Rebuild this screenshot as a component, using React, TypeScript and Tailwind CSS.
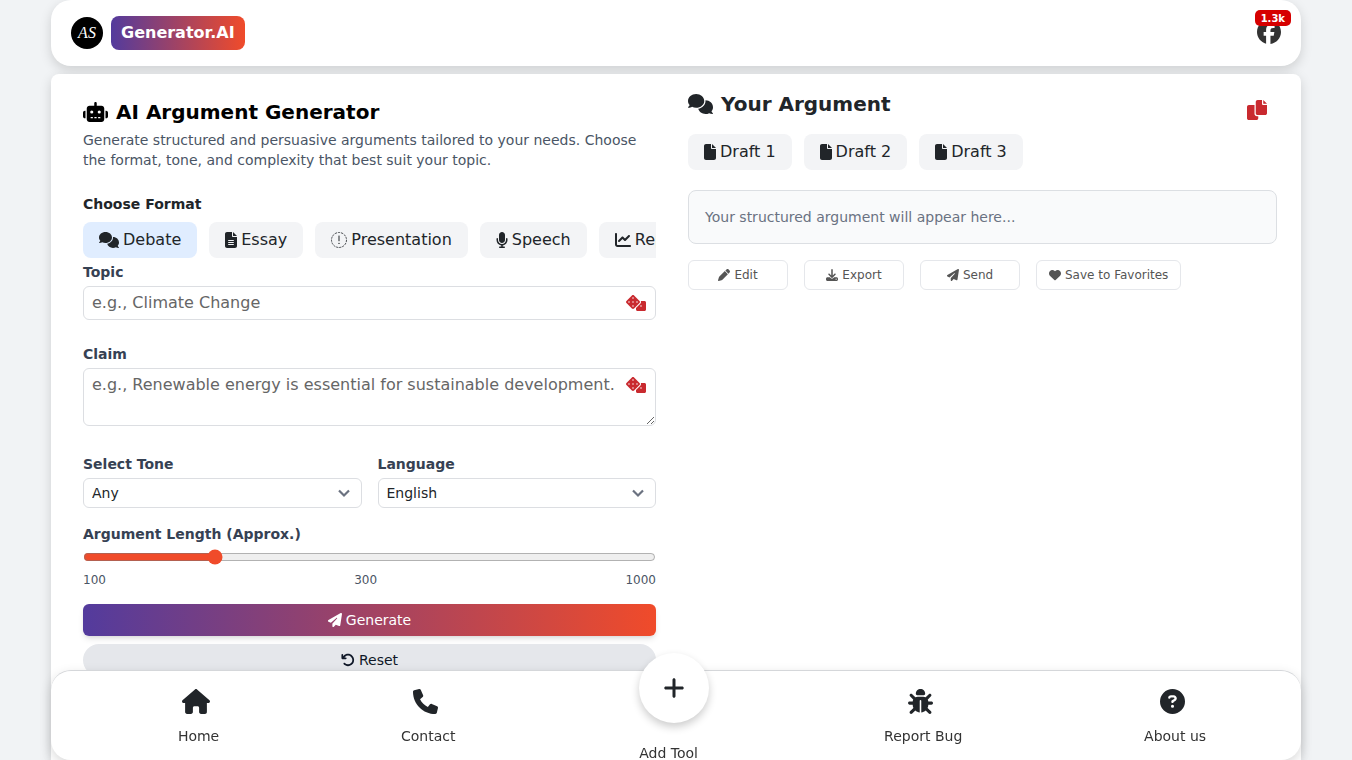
import React, { useState } from 'react';
import type { IconType } from 'react-icons';
import {
  FaBug,
  FaChartLine,
  FaCircleQuestion,
  FaDownload,
  FaFacebook,
  FaFile,
  FaFileLines,
  FaHeart,
  FaHouse,
  FaMicrophone,
  FaPaperPlane,
  FaPen,
  FaPlus,
  FaRobot,
  FaArrowRotateLeft,
} from 'react-icons/fa6';

type Icon = IconType | ((props: { className?: string }) => React.ReactElement);

const CopyIcon = ({ className }: { className?: string }) => (
  <svg viewBox="0 0 512 512" fill="currentColor" className={className} aria-hidden="true">
    <path d="M384 96V0H272c-26.5 0-48 21.500-48 48v288c0 26.500 21.500 48 48 48h192c26.500 0 48-21.500 48-48V128h-96c-17.600 0-32-14.400-32-32zM416 0v96h96L416 0zM192 352V128H48c-26.500 0-48 21.500-48 48v288c0 26.500 21.500 48 48 48h192c26.500 0 48-21.500 48-48v-48h-32c-35.300 0-64-28.700-64-64z" />
  </svg>
);

const CommentsIcon = ({ className }: { className?: string }) => (
  <svg viewBox="0 0 640 512" fill="currentColor" className={className} aria-hidden="true">
    <path d="M416 176C416 78.8 322.9 0 208 0S0 78.8 0 176c0 39.600 15.600 76 41.700 105.400-16.400 32.800-39.200 57.300-39.600 57.700-2.100 2.200-2.700 5.500-1.400 8.300C1.900 350.300 4.600 352 7.700 352c38.300 0 70.400-12.100 95.900-25.900C134.700 342.500 170.200 352 208 352c114.900 0 208-78.800 208-176zM599.600 443.700C624.800 413.900 640 376.600 640 336c0-97.200-86-176-192-176h-.9c.4 5.300.9 10.600.9 16 0 98.600-79.700 181.200-186.100 202.500C282.700 455.100 357.100 512 448 512c33.700 0 65.300-8 92.900-22C565.200 502 596.100 512 632.300 512c3.100 0 5.800-1.700 7-4.600 1.200-2.900.7-6.100-1.400-8.400-.3-.3-22-23.700-38.300-55.300z" />
  </svg>
);

const PhoneIcon = ({ className }: { className?: string }) => (
  <svg viewBox="0 0 512 512" fill="currentColor" className={className} aria-hidden="true">
    <path d="M511.200 387l-23.300 100.800c-3.300 14.200-15.800 24.200-30.500 24.200C205.200 512 0 306.800 0 54.500c0-14.700 10-27.200 24.200-30.400L125 .8c14.700-3.400 29.700 4.200 35.800 18.100l46.500 108.500c5.400 12.800 1.800 27.700-9 36.500L144.500 208c34 69.200 90.300 125.500 159.500 159.500l44.100-53.800c8.700-10.800 23.700-14.500 36.500-9l108.500 46.500c13 6 21.500 21.200 18.100 35.800z" />
  </svg>
);

const DiceIcon = ({ className }: { className?: string }) => (
  <svg viewBox="0 0 640 512" fill="currentColor" fillRule="evenodd" className={className} aria-hidden="true">
    <path d="M448 224c0-12.600-4.800-25.100-14.400-34.800L258.800 14.400C249.100 4.800 236.500 0 224 0s-25.100 4.800-34.800 14.400L14.400 189.200C4.800 198.900 0 211.400 0 224s4.800 25.200 14.400 34.800l174.800 174.900c9.700 9.500 22.300 14.300 34.800 14.300s25.100-4.800 34.800-14.300l174.800-174.900c9.600-9.700 14.400-22.200 14.400-34.800zM96 248a24 24 0 1 1 0-48 24 24 0 0 1 0 48zm128 128a24 24 0 1 1 0-48 24 24 0 0 1 0 48zm0-128a24 24 0 1 1 0-48 24 24 0 0 1 0 48zm0-128a24 24 0 1 1 0-48 24 24 0 0 1 0 48zm128 128a24 24 0 1 1 0-48 24 24 0 0 1 0 48z" />
    <path d="M592 192H473.400c4.400 10.300 6.600 21.200 6.600 32.200 0 20.700-7.900 41.400-23.600 57.200L320 417.600V464c0 26.500 21.500 48 48 48h224c26.500 0 48-21.500 48-48V240c0-26.500-21.500-48-48-48zM480 376a24 24 0 1 1 0-48 24 24 0 0 1 0 48z" />
  </svg>
);

// Dashed circle with an exclamation mark
const NoticeIcon = ({ className }: { className?: string }) => (
  <svg viewBox="0 0 16 16" fill="none" stroke="currentColor" className={className} aria-hidden="true">
    <circle cx="8" cy="8" r="7.500" strokeWidth="0.800" strokeDasharray="2.200 0.900" />
    <path d="M8 4v4.800" strokeWidth="1" strokeLinecap="round" />
    <circle cx="8" cy="11.400" r="0.700" fill="currentColor" stroke="none" />
  </svg>
);

const ChevronIcon = () => (
  <svg
    viewBox="0 0 16 16"
    fill="none"
    stroke="#6b7280"
    strokeWidth="2.200"
    className="pointer-events-none absolute right-2.5 top-1/2 size-4 -translate-y-1/2"
    aria-hidden="true"
  >
    <path d="M3 5.500l5 5 5-5" />
  </svg>
);

const FORMATS: { name: string; icon: Icon; size: string }[] = [
  { name: 'Debate', icon: CommentsIcon, size: 'h-4 w-5' },
  { name: 'Essay', icon: FaFileLines, size: 'h-4 w-3' },
  { name: 'Presentation', icon: NoticeIcon, size: 'size-4' },
  { name: 'Speech', icon: FaMicrophone, size: 'h-4 w-3' },
  { name: 'Report', icon: FaChartLine, size: 'size-4' },
];

const DRAFTS = ['Draft 1', 'Draft 2', 'Draft 3'];

const ACTIONS: { name: string; icon: Icon }[] = [
  { name: 'Edit', icon: FaPen },
  { name: 'Export', icon: FaDownload },
  { name: 'Send', icon: FaPaperPlane },
  { name: 'Save to Favorites', icon: FaHeart },
];

const Header = () => (
  <header className="flex h-[66px] items-center justify-between rounded-[20px] bg-white px-5 shadow-[0_4px_12px_rgba(0,0,0,0.15)]">
    <a href="#" className="flex items-center gap-2">
      <span className="flex size-8 items-center justify-center rounded-full bg-black font-['Liberation_Serif',serif] text-base text-white italic">
        AS
      </span>
      <span className="rounded-lg bg-linear-to-r/srgb from-[#533b9d] to-[#f04b2a] px-2.5 py-[5px] text-base font-bold text-white">
        Generator.AI
      </span>
    </a>
    <a href="#" aria-label="Facebook" className="relative pb-0.5 text-[#333]">
      <FaFacebook className="size-6" />
      <span className="absolute -top-2.5 -right-2.5 flex h-4 items-center rounded-[5px] bg-[#d60000] px-1.5 text-[10px] font-bold text-white">
        1.3k
      </span>
    </a>
  </header>
);

const Label = ({ htmlFor, children }: { htmlFor: string; children: React.ReactNode }) => (
  <label htmlFor={htmlFor} className="block text-sm font-bold text-gray-700">
    {children}
  </label>
);

const DiceButton = ({ label }: { label: string }) => (
  <button type="button" aria-label={label} className="absolute top-[9px] right-2.5 text-[#c92a2f]">
    <DiceIcon className="h-4 w-5" />
  </button>
);

const SelectField = ({ id, label, options }: { id: string; label: string; options: string[] }) => (
  <div className="flex-1">
    <Label htmlFor={id}>{label}</Label>
    <div className="relative mt-1">
      <select
        id={id}
        className="h-[30px] w-full appearance-none rounded-md border border-[#dcdee2] bg-white px-2 text-sm text-[#212529] outline-none"
      >
        {options.map((o) => (
          <option key={o}>{o}</option>
        ))}
      </select>
      <ChevronIcon />
    </div>
  </div>
);

const GeneratorForm = () => {
  const [format, setFormat] = useState('Debate');
  const [length, setLength] = useState(300);

  return (
    <form className="min-w-0 p-2" onSubmit={(e) => e.preventDefault()}>
      <h1 className="flex items-center gap-2 text-xl font-bold text-black">
        <FaRobot className="h-5 w-[25px]" />
        AI Argument Generator
      </h1>
      <p className="mt-1 text-sm text-gray-600">
        Generate structured and persuasive arguments tailored to your needs. Choose the format, tone, and complexity
        that best suit your topic.
      </p>

      <h2 className="mt-6 text-sm font-bold">Choose Format</h2>
      <div className="mt-2 flex gap-3 overflow-hidden">
        {FORMATS.map(({ name, icon: FormatIcon, size }) => (
          <button
            key={name}
            type="button"
            onClick={() => setFormat(name)}
            className={`flex h-9 shrink-0 items-center gap-1 rounded-lg px-4 text-base ${
              format === name ? 'bg-[#e0edff]' : 'bg-gray-100'
            }`}
          >
            <FormatIcon className={size} />
            {name}
          </button>
        ))}
      </div>

      <div className="mt-1">
        <Label htmlFor="topic">Topic</Label>
        <div className="relative mt-1">
          <input
            id="topic"
            placeholder="e.g., Climate Change"
            className="block h-[34px] w-full rounded-md border border-[#dcdee2] pr-9 pb-0.5 pl-2 text-base outline-none placeholder:text-[#666]"
          />
          <DiceButton label="Random topic" />
        </div>
      </div>

      <div className="mt-6">
        <Label htmlFor="claim">Claim</Label>
        <div className="relative mt-1">
          <textarea
            id="claim"
            rows={2}
            placeholder="e.g., Renewable energy is essential for sustainable development."
            className="block w-full resize-y rounded-md border border-[#dcdee2] py-1 pr-9 pl-2 text-base outline-none placeholder:text-[#666]"
          />
          <DiceButton label="Random claim" />
        </div>
      </div>

      <div className="mt-7 flex gap-4">
        <SelectField id="tone" label="Select Tone" options={['Any', 'Formal', 'Persuasive', 'Casual']} />
        <SelectField id="language" label="Language" options={['English', 'Spanish', 'French', 'German']} />
      </div>

      <div className="mt-4">
        <Label htmlFor="length">Argument Length (Approx.)</Label>
        <input
          id="length"
          type="range"
          min={100}
          max={1000}
          value={length}
          onChange={(e) => setLength(Number(e.target.value))}
          className="mt-[5px] block h-4 w-full accent-[#f04b2a]"
        />
        <div className="mt-[7px] flex justify-between text-xs text-gray-600">
          <span>100</span>
          <output htmlFor="length">{length}</output>
          <span>1000</span>
        </div>
      </div>

      <button
        type="submit"
        className="mt-4 flex h-8 w-full items-center justify-center gap-1 rounded-md bg-linear-to-r/srgb from-[#533b9d] to-[#f04b2a] text-sm text-white shadow-md"
      >
        <FaPaperPlane className="size-3.5" />
        Generate
      </button>
      <button
        type="reset"
        onClick={() => setLength(300)}
        className="mt-2 flex h-8 w-full items-center justify-center gap-1 rounded-full bg-gray-200 text-sm text-gray-900"
      >
        <FaArrowRotateLeft className="size-3.5" />
        Reset
      </button>
    </form>
  );
};

const ArgumentPanel = () => (
  <section className="min-w-0">
    <div className="flex items-start justify-between">
      <h2 className="flex items-center gap-2 text-xl font-bold">
        <CommentsIcon className="h-5 w-[25px]" />
        Your Argument
      </h2>
      <button type="button" aria-label="Copy argument" className="px-2.5 pt-2.5 text-[#c92a2f]">
        <CopyIcon className="size-5" />
      </button>
    </div>

    <div className="mt-3.5 flex gap-3">
      {DRAFTS.map((draft) => (
        <button key={draft} type="button" className="flex h-9 items-center gap-1 rounded-lg bg-gray-100 px-4 text-base">
          <FaFile className="h-4 w-3" />
          {draft}
        </button>
      ))}
    </div>

    <div className="mt-5 rounded-lg border border-[#dcdfe3] bg-gray-50 p-4 text-sm text-gray-500">
      Your structured argument will appear here...
    </div>

    <div className="mt-4 flex flex-wrap gap-4">
      {ACTIONS.map(({ name, icon: ActionIcon }) => (
        <button
          key={name}
          type="button"
          className="flex h-[30px] min-w-[100px] items-center justify-center gap-1 rounded-md border border-gray-200 px-3 text-xs text-[#555]"
        >
          <ActionIcon className="size-3" />
          {name}
        </button>
      ))}
    </div>
  </section>
);

const NavItem = ({ icon: ItemIcon, size, label }: { icon: Icon; size: string; label: string }) => (
  <li>
    <a href="#" className="flex flex-col items-center pt-[18px]">
      <ItemIcon className={`mr-[5px] ${size}`} />
      <span className="mt-3 text-sm text-[#333]">{label}</span>
    </a>
  </li>
);

const BottomNav = () => (
  <nav className="fixed inset-x-0 bottom-0 mx-auto h-[90px] w-full max-w-[1250px] rounded-[20px] border-t border-[#d5d7da] bg-white shadow-[0_4px_12px_rgba(0,0,0,0.15)]">
    <ul className="flex justify-around pr-1 pl-9">
      <NavItem icon={FaHouse} size="h-[25px] w-7" label="Home" />
      <NavItem icon={PhoneIcon} size="size-[25px]" label="Contact" />
      <li className="w-[65px] pl-0.5">
        <a href="#" className="-mt-[18px] flex flex-col items-start">
          <span className="flex size-[70px] shrink-0 items-center justify-center rounded-full bg-white shadow-[0_4px_8px_rgba(0,0,0,0.2)]">
            <FaPlus className="size-6" />
          </span>
          <span className="mt-5 text-sm whitespace-nowrap text-[#333]">Add Tool</span>
        </a>
      </li>
      <NavItem icon={FaBug} size="size-[25px]" label="Report Bug" />
      <NavItem icon={FaCircleQuestion} size="size-[25px]" label="About us" />
    </ul>
  </nav>
);

const App = () => (
  <div className="min-h-screen bg-[#f1f3f5] font-['DejaVu_Sans',sans-serif] text-[#212529]">
    <div className="mx-auto flex min-h-screen max-w-[1250px] flex-col gap-2">
      <Header />
      <main className="grid flex-1 grid-cols-2 content-start gap-6 rounded-t-lg bg-white px-6 pt-4 shadow-[0_4px_12px_rgba(0,0,0,0.15)]">
        <GeneratorForm />
        <ArgumentPanel />
      </main>
    </div>
    <BottomNav />
  </div>
);

export default App;
